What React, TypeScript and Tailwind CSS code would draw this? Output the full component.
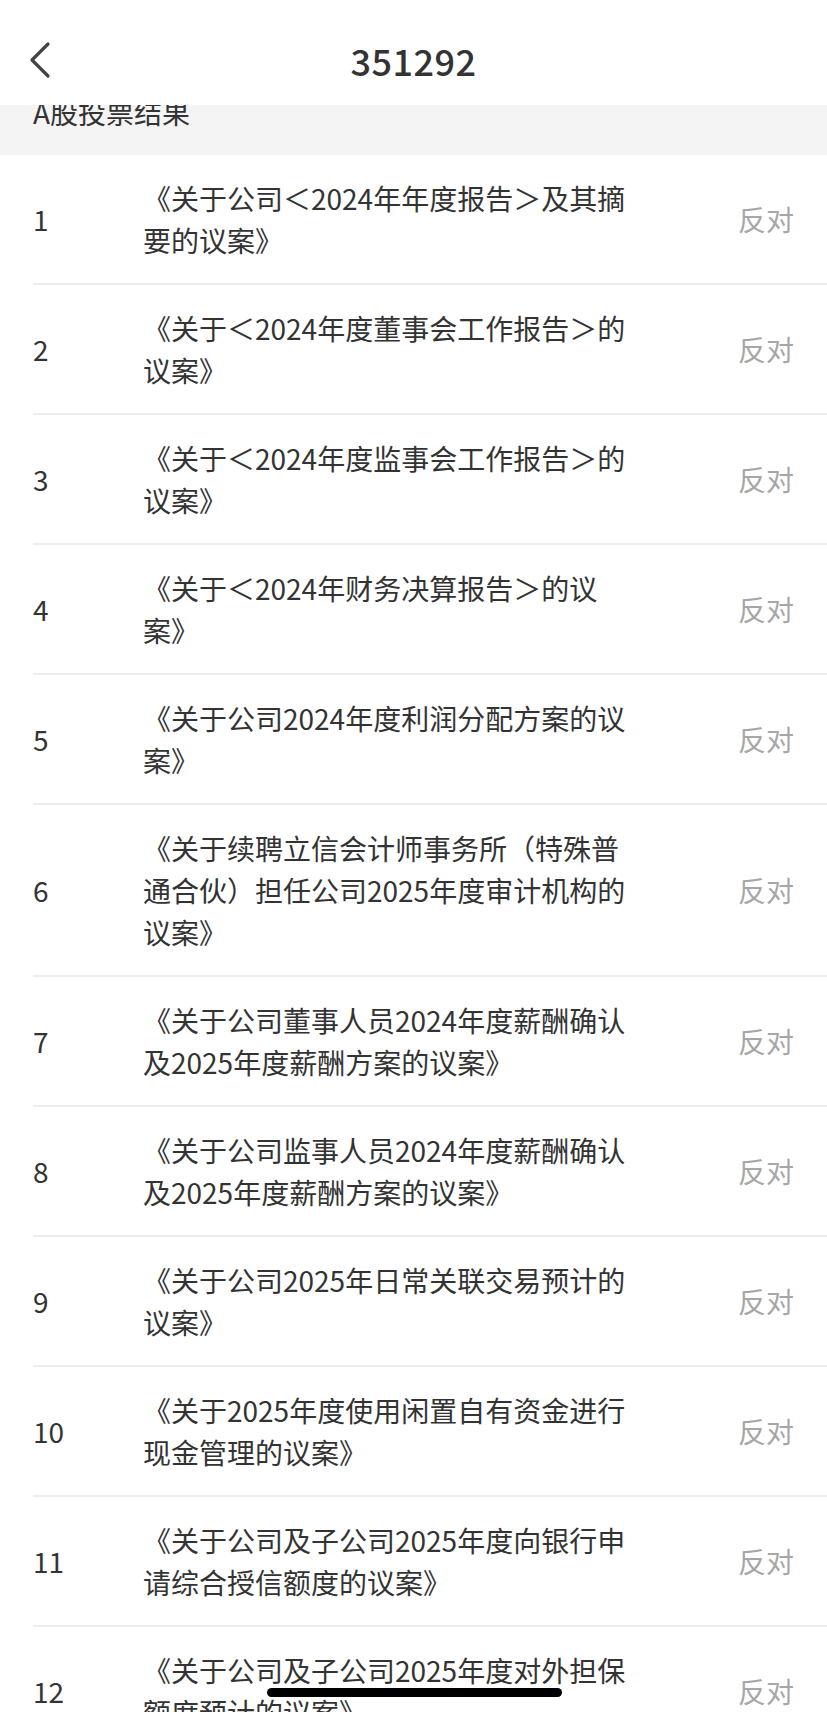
const ITEMS: { no: number; lines: string[] }[] = [
  { no: 1, lines: ['《关于公司＜2024年年度报告＞及其摘', '要的议案》'] },
  { no: 2, lines: ['《关于＜2024年度董事会工作报告＞的', '议案》'] },
  { no: 3, lines: ['《关于＜2024年度监事会工作报告＞的', '议案》'] },
  { no: 4, lines: ['《关于＜2024年财务决算报告＞的议', '案》'] },
  { no: 5, lines: ['《关于公司2024年度利润分配方案的议', '案》'] },
  { no: 6, lines: ['《关于续聘立信会计师事务所（特殊普', '通合伙）担任公司2025年度审计机构的', '议案》'] },
  { no: 7, lines: ['《关于公司董事人员2024年度薪酬确认', '及2025年度薪酬方案的议案》'] },
  { no: 8, lines: ['《关于公司监事人员2024年度薪酬确认', '及2025年度薪酬方案的议案》'] },
  { no: 9, lines: ['《关于公司2025年日常关联交易预计的', '议案》'] },
  { no: 10, lines: ['《关于2025年度使用闲置自有资金进行', '现金管理的议案》'] },
  { no: 11, lines: ['《关于公司及子公司2025年度向银行申', '请综合授信额度的议案》'] },
  { no: 12, lines: ['《关于公司及子公司2025年度对外担保', '额度预计的议案》'] },
];

const FONT = { fontFamily: '"Noto Sans CJK SC", "Noto Sans", sans-serif' };

export default function App() {
  return (
    <div className="relative w-[827px] h-[1712px] overflow-hidden bg-white text-[#333]" style={FONT}>
      {/* nav bar */}
      <div className="grid grid-cols-[1fr_auto_1fr] items-center h-[105px] pt-[15px] bg-white">
        <button className="flex items-center pl-[28px] h-full">
          <svg width="26" height="38" viewBox="0 0 26 38" fill="none">
            <polyline points="20,3 4,19 20,35" stroke="#444" strokeWidth="3.2" strokeLinecap="round" strokeLinejoin="round" />
          </svg>
        </button>
        <h1 className="text-[36px] font-medium tracking-[0.5px] text-[#333]">351292</h1>
        <div />
      </div>

      {/* section title, scrolled under the nav */}
      <div className="h-[50px] overflow-hidden bg-[#f4f4f4] px-[33px]">
        <p className="-mt-[14px] text-[28px] leading-[42px] text-[#333]">A股投票结果</p>
      </div>

      <ul>
        {ITEMS.map((it) => (
          <li key={it.no} className="ml-[33px] flex items-center border-b-2 border-[#ededed] py-[22px] pr-[33px]">
            <span className="w-[110px] shrink-0 text-[28px] leading-[42px] text-[#333]">{it.no}</span>
            <div className="flex-1 text-[28px] leading-[42px] text-[#333]">
              {it.lines.map((l, i) => (
                <div key={i} className="whitespace-nowrap">{l}</div>
              ))}
            </div>
            <span className="shrink-0 text-[28px] leading-[42px] text-[#a6a6a6]">反对</span>
          </li>
        ))}
      </ul>

      {/* home indicator */}
      <div className="absolute left-[267px] top-[1688px] h-[9px] w-[295px] rounded-full bg-black" />
    </div>
  );
}
